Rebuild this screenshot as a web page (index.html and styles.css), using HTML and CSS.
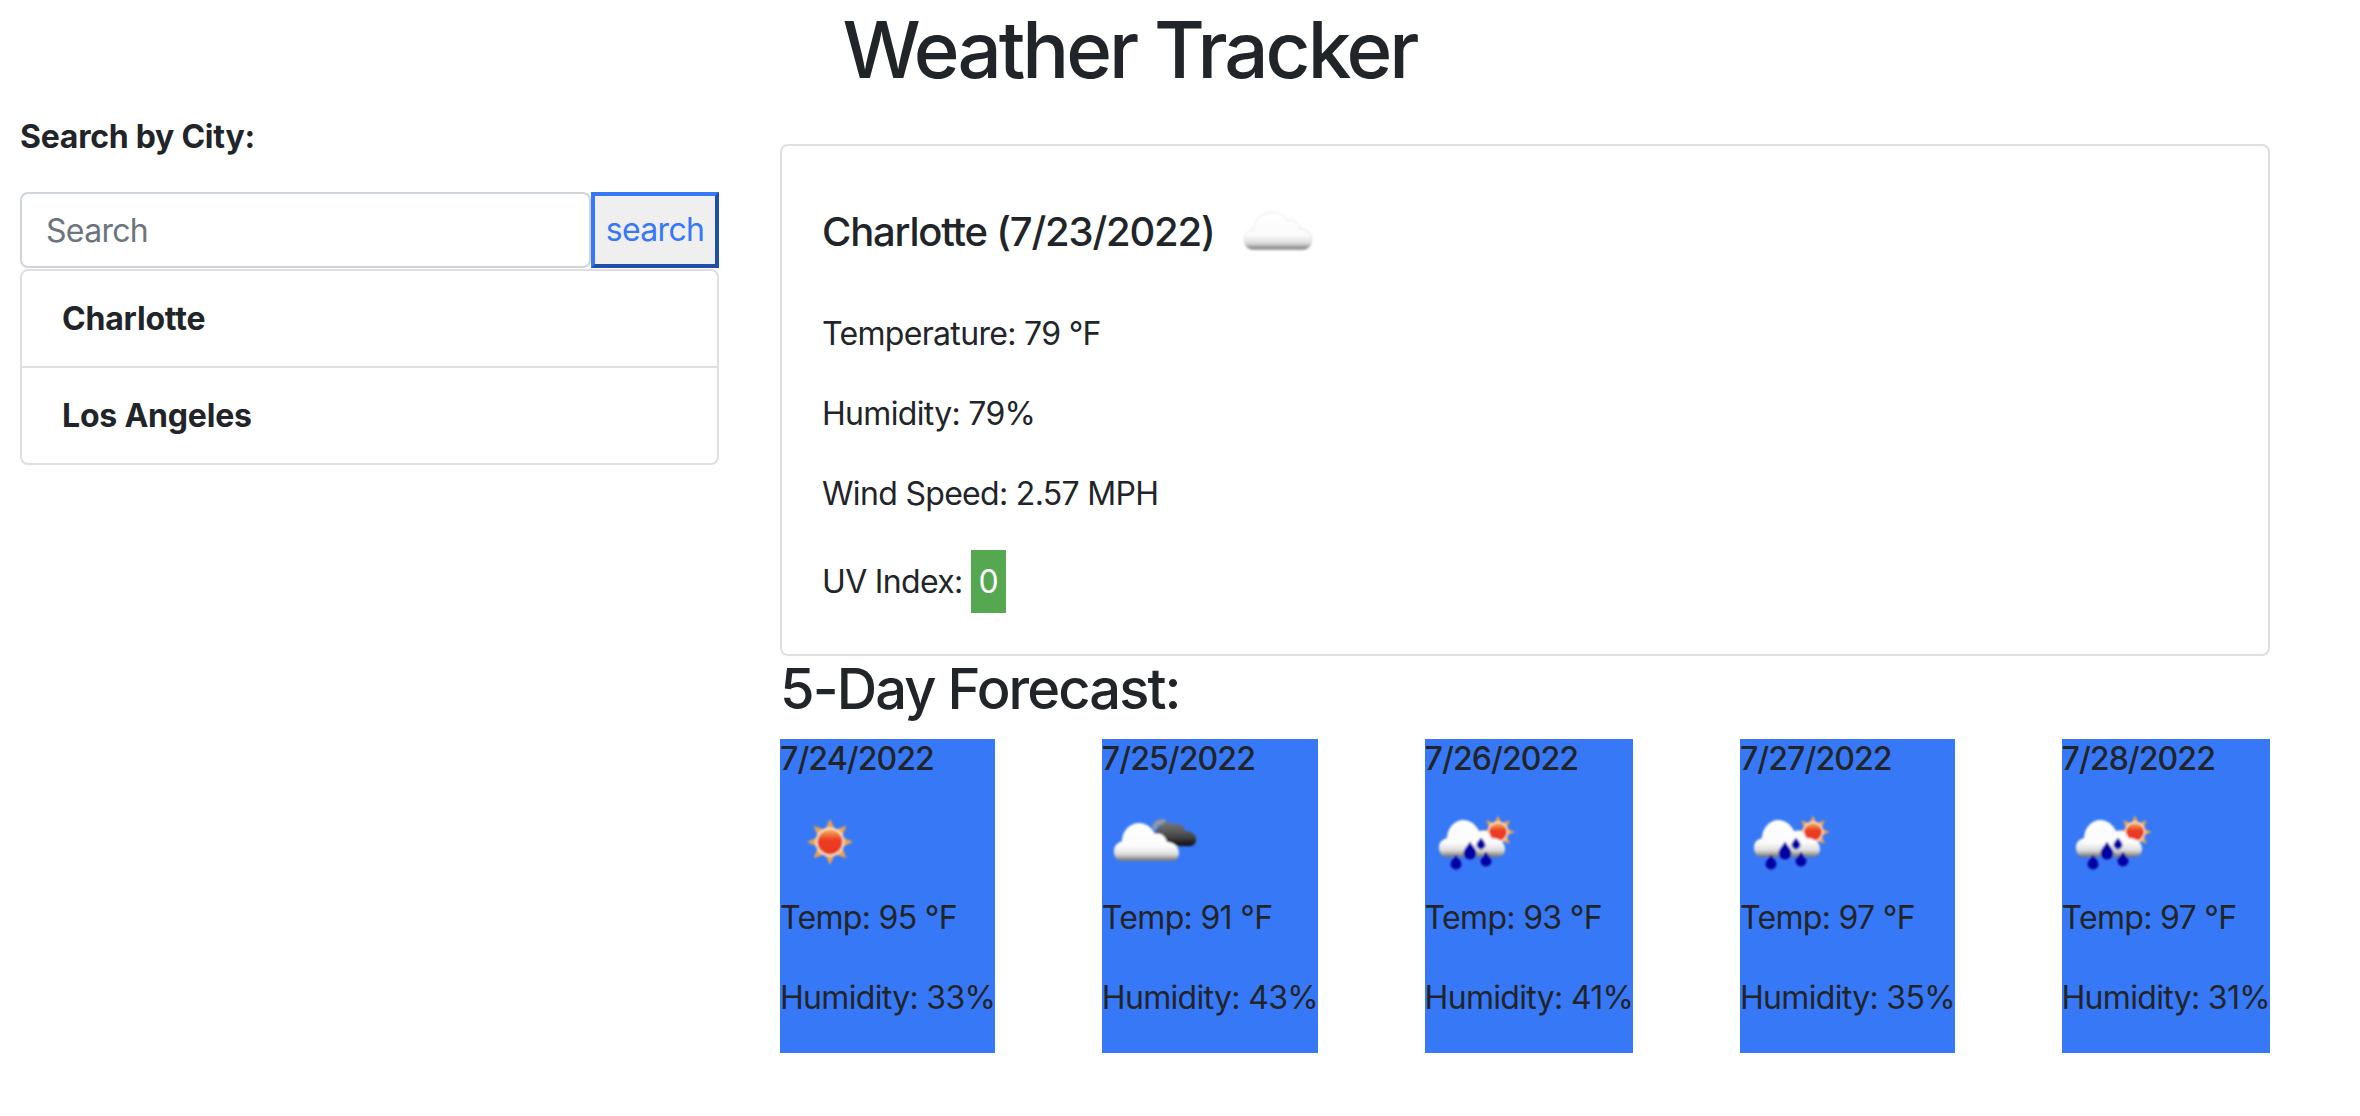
FILE: index.html
```html
<!DOCTYPE html>
<html lang="en">
<head>
  <meta charset="UTF-8">
  <title>Weather Tracker</title>
  <link rel="stylesheet" href="styles.css">
</head>
<body>

  <svg class="icon-defs" width="0" height="0" aria-hidden="true">
    <defs>
      <linearGradient id="cloudFill" x1="0" y1="0" x2="0" y2="1">
        <stop offset="0" stop-color="#ffffff"/>
        <stop offset="0.62" stop-color="#fbfbfb"/>
        <stop offset="0.82" stop-color="#dcdcdc"/>
        <stop offset="1" stop-color="#6f6f6f"/>
      </linearGradient>
      <linearGradient id="darkFill" x1="0" y1="0" x2="0" y2="1">
        <stop offset="0" stop-color="#777777"/>
        <stop offset="0.6" stop-color="#474747"/>
        <stop offset="1" stop-color="#0c0c0c"/>
      </linearGradient>
      <linearGradient id="sunFill" x1="0" y1="0" x2="0" y2="1">
        <stop offset="0" stop-color="#f6b25a"/>
        <stop offset="0.42" stop-color="#ec3c22"/>
        <stop offset="1" stop-color="#e83a24"/>
      </linearGradient>
      <filter id="soft" x="-10%" y="-10%" width="120%" height="120%">
        <feGaussianBlur stdDeviation="0.9"/>
      </filter>
      <symbol id="sun" viewBox="0 0 100 100">
        <polygon fill="#f2a34a" points="73,50 62,55 66.3,66.3 55,62 50,73 45,62 33.7,66.3 38,55 27,50 38,45 33.7,33.7 45,38 50,27 55,38 66.3,33.7 62,45"/>
        <circle cx="50" cy="50" r="14.5" fill="#f8e6cf"/>
        <circle cx="50" cy="50" r="12.5" fill="url(#sunFill)"/>
      </symbol>
    </defs>
  </svg>

  <h1 class="page-title">Weather Tracker</h1>

  <div class="layout">
    <aside class="sidebar">
      <p class="search-label">Search by City:</p>
      <form class="search-form">
        <input class="search-input" type="text" placeholder="Search">
        <button class="search-btn" type="button">search</button>
      </form>
      <ul class="city-list">
        <li class="city-item">Charlotte</li>
        <li class="city-item">Los Angeles</li>
      </ul>
    </aside>

    <main class="content">
      <section class="current">
        <div class="current-head">
          <h2 class="current-title">Charlotte (7/23/2022)</h2>
          <svg class="icon" viewBox="0 0 100 100">
            <path class="cloud-pale" filter="url(#soft)" d="M25 66C19 66 16 61 16 56C16 50 20 47 25 46C26 36 34 28 44 28C52 28 56 32 59 37C65 34 71 38 72 45C79 44 84 50 84 56C84 62 80 66 75 66Z"/>
          </svg>
        </div>
        <p class="line">Temperature: 79 °F</p>
        <p class="line">Humidity: 79%</p>
        <p class="line">Wind Speed: 2.57 MPH</p>
        <p class="line line-uv">UV Index: <span class="uv-badge">0</span></p>
      </section>

      <h3 class="forecast-title">5-Day Forecast:</h3>

      <div class="forecast">
        <div class="day">
          <div class="day-date">7/24/2022</div>
          <svg class="day-icon" viewBox="0 0 100 100">
            <use href="#sun" filter="url(#soft)"/>
          </svg>
          <p class="day-line">Temp: 95 °F</p>
          <p class="day-line">Humidity: 33%</p>
        </div>

        <div class="day">
          <div class="day-date">7/25/2022</div>
          <svg class="day-icon" viewBox="0 0 100 100">
            <g filter="url(#soft)">
              <path fill="#9a9a9a" d="M50 36C52 29 58 25 64 28L62 33C58 31 55 33 54 38Z"/>
              <path fill="url(#darkFill)" d="M55 54C50 48 52 38 58 35C60 29 68 29 72 33C75 30 82 33 83 39C90 39 95 43 94 49C93 53 90 54 87 54Z"/>
              <path fill="url(#cloudFill)" d="M20 69C14 69 12 64 12 59C12 53 17 50 20 49C20 39 28 31 37 31C45 31 50 36 53 42C59 40 64 45 65 50C72 50 77 55 77 61C77 66 74 69 70 69Z"/>
            </g>
          </svg>
          <p class="day-line">Temp: 91 °F</p>
          <p class="day-line">Humidity: 43%</p>
        </div>

        <div class="day">
          <div class="day-date">7/26/2022</div>
          <svg class="day-icon" viewBox="0 0 100 100">
            <g filter="url(#soft)">
              <use href="#sun" x="37" y="4" width="72" height="72"/>
              <path fill="url(#cloudFill)" d="M22 65C16 65 14 60 14 55C14 50 18 47 22 46C22 36 30 28 38 28C46 28 51 33 54 39C60 37 65 40 66 46C74 46 80 50 80 57C80 62 77 65 72 65Z"/>
              <path class="drop" d="M31 63C29 67 26 69 26 72C26 75 28 77 31 77C34 77 36 75 36 72C36 69 33 67 31 63Z"/>
              <path class="drop" d="M45 50C43 54 39 57 39 61C39 65 42 67 45 67C48 67 51 65 51 61C51 57 47 54 45 50Z"/>
              <path class="drop" d="M61 60C59 64 56 66 56 69C56 72 58 74 61 74C64 74 66 72 66 69C66 66 63 64 61 60Z"/>
              <path class="drop" d="M56 46C55 48 52 50 52 53C52 55 54 57 56 57C58 57 60 55 60 53C60 50 57 48 56 46Z"/>
            </g>
          </svg>
          <p class="day-line">Temp: 93 °F</p>
          <p class="day-line">Humidity: 41%</p>
        </div>

        <div class="day">
          <div class="day-date">7/27/2022</div>
          <svg class="day-icon" viewBox="0 0 100 100">
            <g filter="url(#soft)">
              <use href="#sun" x="37" y="4" width="72" height="72"/>
              <path fill="url(#cloudFill)" d="M22 65C16 65 14 60 14 55C14 50 18 47 22 46C22 36 30 28 38 28C46 28 51 33 54 39C60 37 65 40 66 46C74 46 80 50 80 57C80 62 77 65 72 65Z"/>
              <path class="drop" d="M31 63C29 67 26 69 26 72C26 75 28 77 31 77C34 77 36 75 36 72C36 69 33 67 31 63Z"/>
              <path class="drop" d="M45 50C43 54 39 57 39 61C39 65 42 67 45 67C48 67 51 65 51 61C51 57 47 54 45 50Z"/>
              <path class="drop" d="M61 60C59 64 56 66 56 69C56 72 58 74 61 74C64 74 66 72 66 69C66 66 63 64 61 60Z"/>
              <path class="drop" d="M56 46C55 48 52 50 52 53C52 55 54 57 56 57C58 57 60 55 60 53C60 50 57 48 56 46Z"/>
            </g>
          </svg>
          <p class="day-line">Temp: 97 °F</p>
          <p class="day-line">Humidity: 35%</p>
        </div>

        <div class="day">
          <div class="day-date">7/28/2022</div>
          <svg class="day-icon" viewBox="0 0 100 100">
            <g filter="url(#soft)">
              <use href="#sun" x="37" y="4" width="72" height="72"/>
              <path fill="url(#cloudFill)" d="M22 65C16 65 14 60 14 55C14 50 18 47 22 46C22 36 30 28 38 28C46 28 51 33 54 39C60 37 65 40 66 46C74 46 80 50 80 57C80 62 77 65 72 65Z"/>
              <path class="drop" d="M31 63C29 67 26 69 26 72C26 75 28 77 31 77C34 77 36 75 36 72C36 69 33 67 31 63Z"/>
              <path class="drop" d="M45 50C43 54 39 57 39 61C39 65 42 67 45 67C48 67 51 65 51 61C51 57 47 54 45 50Z"/>
              <path class="drop" d="M61 60C59 64 56 66 56 69C56 72 58 74 61 74C64 74 66 72 66 69C66 66 63 64 61 60Z"/>
              <path class="drop" d="M56 46C55 48 52 50 52 53C52 55 54 57 56 57C58 57 60 55 60 53C60 50 57 48 56 46Z"/>
            </g>
          </svg>
          <p class="day-line">Temp: 97 °F</p>
          <p class="day-line">Humidity: 31%</p>
        </div>
      </div>
    </main>
  </div>

</body>
</html>
```

FILE: styles.css
```css
body {
  margin: 0;
  padding-top: 2px;
  font-family: Inter, "Liberation Sans", sans-serif;
  font-size: 32px;
  letter-spacing: -0.68px;
  line-height: 48px;
  color: #212529;
  background-color: #fff;
}
p {
  margin: 0;
}
.icon-defs {
  position: absolute;
}
.page-title {
  margin: 0;
  padding-right: 101px;
  font-size: 78px;
  font-weight: 500;
  letter-spacing: -3px;
  line-height: 96px;
  text-align: center;
}
.layout {
  display: flex;
  gap: 61px;
  padding: 0 90px 0 20px;
}
.sidebar {
  flex: 0 0 699px;
  padding-top: 15px;
}
.search-label {
  margin-bottom: 31px;
  font-weight: 700;
  letter-spacing: -0.25px;
}
.search-form {
  display: flex;
  height: 76px;
  margin-bottom: 1px;
}
.search-input {
  flex: 0 0 571px;
  box-sizing: border-box;
  padding: 1px 24px 0;
  border: 2px solid #ced4da;
  border-radius: 8px;
  font: inherit;
  letter-spacing: inherit;
  color: #212529;
}
.search-input::placeholder {
  color: #6c757d;
  opacity: 1;
}
.search-btn {
  flex: 1;
  padding: 0;
  border: 4px solid;
  border-color: #3778f6 #1f4fa8 #1f4fa8 #3778f6;
  background-color: #efefef;
  font: inherit;
  letter-spacing: inherit;
  color: #3778f6;
  cursor: pointer;
}
.city-list {
  margin: 0;
  padding: 0;
  list-style: none;
  border: 2px solid #dfdfdf;
  border-radius: 8px;
}
.city-item {
  padding: 23.5px 40px;
  height: 48px;
  font-weight: 700;
  letter-spacing: -0.2px;
}
.city-item + .city-item {
  border-top: 2px solid #dfdfdf;
}
.content {
  flex: 1;
  padding-top: 46px;
}
.current {
  box-sizing: border-box;
  height: 512px;
  padding: 36px 40px 0;
  border: 2px solid #dfdfdf;
  border-radius: 8px;
}
.current-head {
  display: flex;
  align-items: center;
  height: 100px;
  margin-bottom: 28px;
}
.current-title {
  margin: 0 13px 0 0;
  font-size: 40px;
  font-weight: 500;
  letter-spacing: -1.2px;
}
.icon {
  width: 100px;
  height: 100px;
  margin-top: 4px;
}
.cloud-pale {
  fill: url(#cloudFill);
  stroke: #e4e4e4;
  stroke-width: 1;
}
.line {
  margin-bottom: 32px;
}
.line-uv {
  display: flex;
  align-items: center;
  gap: 8px;
  margin-bottom: 0;
}
.uv-badge {
  padding: 8px 8px;
  line-height: 47px;
  color: #fff;
  background-color: #55a84f;
}
.forecast-title {
  margin: 0 0 16px;
  font-size: 56px;
  font-weight: 500;
  letter-spacing: -1.9px;
  line-height: 67px;
}
.forecast {
  display: flex;
  justify-content: space-between;
}
.day {
  height: 314px;
  background-color: #3778f6;
}
.day-date {
  font-weight: 500;
  letter-spacing: -0.9px;
  line-height: 40px;
}
.day-icon {
  display: block;
  width: 100px;
  height: 100px;
  margin: 13px 0 2px;
}
.day-line {
  margin-bottom: 32px;
}
.drop {
  fill: #0000a4;
  stroke: #0000a4;
  stroke-width: 1;
}
```
